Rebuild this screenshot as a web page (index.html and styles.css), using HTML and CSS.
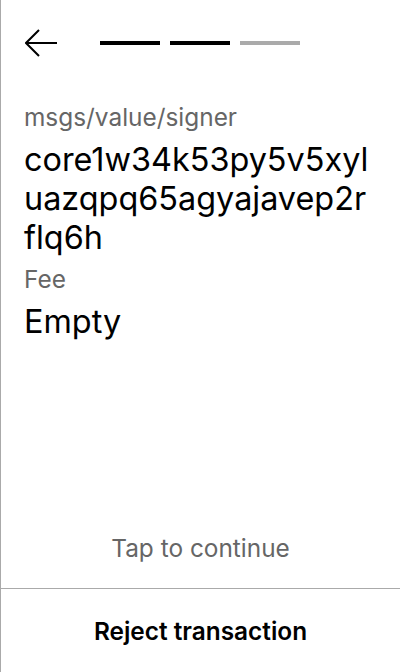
FILE: index.html
```html
<!DOCTYPE html>
<html>
<head>
<meta charset="utf-8">
<link rel="stylesheet" href="styles.css">
</head>
<body>
<div class="screen">
  <div class="header">
    <svg class="back" width="32" height="28" viewBox="0 0 32 28" fill="none" stroke="#000" stroke-width="2">
      <path d="M1 14 H32 M14 1 L1 14 L14 27"/>
    </svg>
    <div class="progress">
      <span class="bar on"></span>
      <span class="bar on"></span>
      <span class="bar"></span>
    </div>
  </div>
  <div class="content">
    <div class="label">msgs/value/signer</div>
    <div class="value">core1w34k53py5v5xyluazqpq65agyajavep2rflq6h</div>
    <div class="label">Fee</div>
    <div class="value">Empty</div>
  </div>
  <div class="tap">Tap to continue</div>
  <div class="reject">Reject transaction</div>
</div>
</body>
</html>
```
FILE: styles.css
```css
html, body {
  margin: 0;
  padding: 0;
  background: #fff;
}
body {
  font-family: Inter, "Noto Sans", sans-serif;
  color: #000;
}
.screen {
  width: 400px;
  height: 672px;
  box-sizing: border-box;
  border-left: 1px solid #aaa;
  display: flex;
  flex-direction: column;
}
.header {
  display: flex;
  align-items: center;
  padding: 29px 0 0 24px;
}
.back {
  display: block;
}
.progress {
  display: flex;
  gap: 10px;
  margin-left: 43px;
}
.bar {
  width: 60px;
  height: 4px;
  background: #aaa;
}
.bar.on {
  background: #000;
}
.content {
  padding: 46px 25px 0 23px;
  flex: 1;
  display: flex;
  flex-direction: column;
  gap: 8px;
}
.label {
  font-size: 24.4px;
  line-height: 29px;
  color: #666;
}
.value {
  font-size: 32.4px;
  line-height: 39px;
  word-break: break-all;
}
.tap {
  text-align: center;
  font-size: 24.4px;
  line-height: 32px;
  color: #666;
  padding-bottom: 24px;
}
.reject {
  border-top: 1px solid #aaa;
  height: 83px;
  display: flex;
  align-items: center;
  justify-content: center;
  font-size: 24.4px;
  font-weight: 600;
}
```
